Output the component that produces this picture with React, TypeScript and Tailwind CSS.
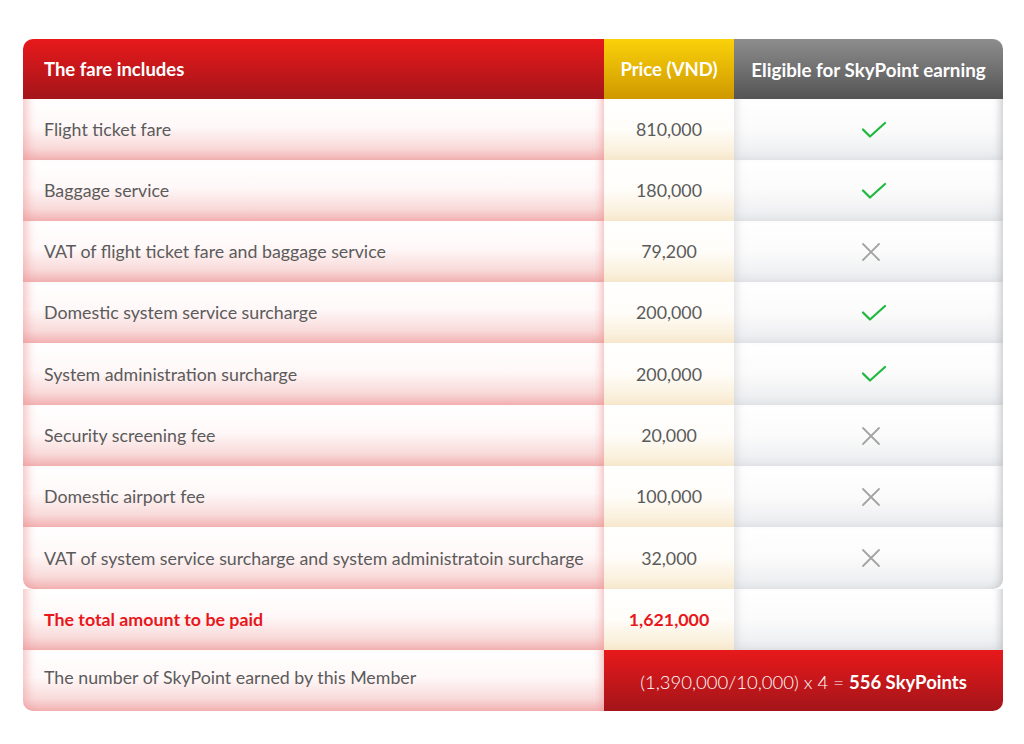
import React from 'react';

type Row = { label: string; price: string; ok: boolean; h: string };

const rows: Row[] = [
  { label: 'Flight ticket fare', price: '810,000', ok: true, h: 'h-[61px]' },
  { label: 'Baggage service', price: '180,000', ok: true, h: 'h-[61px]' },
  { label: 'VAT of flight ticket fare and baggage service', price: '79,200', ok: false, h: 'h-[61px]' },
  { label: 'Domestic system service surcharge', price: '200,000', ok: true, h: 'h-[61px]' },
  { label: 'System administration surcharge', price: '200,000', ok: true, h: 'h-[62px]' },
  { label: 'Security screening fee', price: '20,000', ok: false, h: 'h-[61px]' },
  { label: 'Domestic airport fee', price: '100,000', ok: false, h: 'h-[61px]' },
  { label: 'VAT of system service surcharge and system administratoin surcharge', price: '32,000', ok: false, h: 'h-[62px]' },
];

const labelCell =
  'flex items-center pl-[21px] text-[17.8px] text-[#5b5b5b] bg-[linear-gradient(to_bottom,#ffffff_0%,#fff8f8_45%,#f9dada_80%,#f2b1b1_100%)] shadow-[inset_12px_0_10px_-8px_rgba(238,150,150,0.55),inset_-10px_0_8px_-8px_rgba(238,150,150,0.7)]';
const priceCell =
  'flex items-center justify-center text-[17.8px] text-[#5b5b5b] bg-[linear-gradient(to_bottom,#ffffff_0%,#fffdf9_50%,#faf0dc_85%,#f6e7cb_100%)]';
const okCell =
  'flex items-center justify-center bg-[linear-gradient(to_bottom,#ffffff_0%,#fbfbfb_50%,#eff0f2_85%,#e2e4e7_100%)] shadow-[inset_10px_0_10px_-8px_rgba(200,202,206,0.6),inset_-10px_0_8px_-8px_rgba(180,182,186,0.8)]';

const Check = () => (
  <svg className="ml-[10px]" width="26" height="18" viewBox="0 0 26 18" fill="none">
    <path d="M2 8.5 L9 15.5 L24 2" stroke="#1fb83f" strokeWidth="2.2" strokeLinecap="round" strokeLinejoin="round" />
  </svg>
);

const Cross = () => (
  <svg className="ml-[5px]" width="20" height="20" viewBox="0 0 20 20" fill="none">
    <path d="M2 2 L18 18 M18 2 L2 18" stroke="#a3a3a3" strokeWidth="1.8" strokeLinecap="round" />
  </svg>
);

export default function App() {
  return (
    <div className="w-[1024px] h-[744px] bg-white pt-[39px] pl-[23px] font-['Lato',sans-serif]">
      <div className="grid w-[980px] grid-cols-[581px_130px_269px]">
        {/* header */}
        <div className="h-[60px] flex items-center pl-[21px] pt-[2px] rounded-tl-[10px] text-[18.5px] font-bold text-white bg-[linear-gradient(to_bottom,#e8191b,#a3151a)]">
          The fare includes
        </div>
        <div className="h-[60px] flex items-center justify-center pt-[2px] text-[18.5px] font-bold text-white bg-[linear-gradient(to_bottom,#fad20a,#cf9800)]">
          Price (VND)
        </div>
        <div className="h-[60px] flex items-center justify-center pt-[2px] rounded-tr-[10px] text-[18.8px] font-bold text-white bg-[linear-gradient(to_bottom,#8d8d8d,#545454)]">
          Eligible for SkyPoint earning
        </div>

        {rows.map((r, i) => {
          const last = i === rows.length - 1;
          return (
            <React.Fragment key={r.label}>
              <div className={`${r.h} ${labelCell} ${last ? 'rounded-bl-[10px]' : ''}`}>{r.label}</div>
              <div className={`${r.h} ${priceCell}`}>{r.price}</div>
              <div className={`${r.h} ${okCell} ${last ? 'rounded-br-[10px]' : ''}`}>
                {r.ok ? <Check /> : <Cross />}
              </div>
            </React.Fragment>
          );
        })}

        {/* total */}
        <div className={`h-[61px] ${labelCell} font-bold text-[#e8171b]`}>The total amount to be paid</div>
        <div className={`h-[61px] ${priceCell} font-bold text-[#e8171b]`}>1,621,000</div>
        <div className={`h-[61px] ${okCell}`} />

        {/* skypoint */}
        <div className={`h-[61px] ${labelCell} pb-[6px] rounded-bl-[10px]`}>The number of SkyPoint earned by this Member</div>
        <div className="col-span-2 h-[61px] flex items-center justify-center pt-[4px] rounded-br-[10px] text-[18.5px] text-white bg-[linear-gradient(to_bottom,#e8191b,#a3151a)]">
          <span className="font-light">(1,390,000/10,000) x 4 =&nbsp;</span>
          <span className="font-bold">556 SkyPoints</span>
        </div>
      </div>
    </div>
  );
}
